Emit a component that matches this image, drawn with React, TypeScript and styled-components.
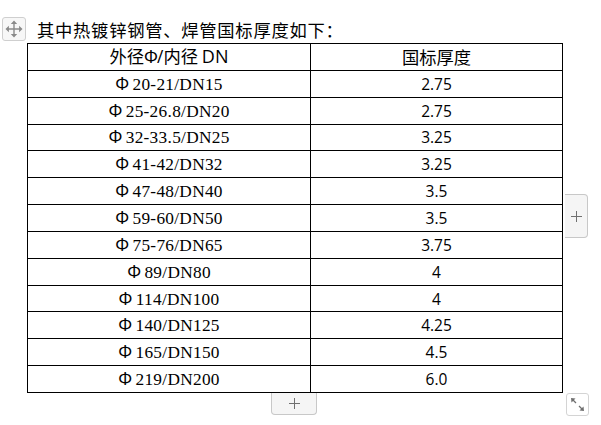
import React from "react";
import styled, { createGlobalStyle } from "styled-components";

const Global = createGlobalStyle`
  html, body { margin: 0; padding: 0; background: #fff; }
  body { width: 601px; height: 425px; overflow: hidden; }
`;

const Page = styled.div`
  position: relative;
  width: 601px;
  height: 425px;
  padding: 17px 0 0 2px;
  box-sizing: border-box;
`;

const TitleRow = styled.div`
  display: flex;
  align-items: center;
  gap: 11px;
  height: 24px;
`;

const Handle = styled.div`
  width: 24px;
  height: 24px;
  box-sizing: border-box;
  border: 1px solid #cfcfcf;
  border-radius: 3px;
  background: #f7f7f7;
  display: flex;
  align-items: center;
  justify-content: center;
`;

const Title = styled.div`
  font-family: "Noto Sans CJK SC", sans-serif;
  font-size: 17.3px;
  letter-spacing: 0.75px;
  line-height: 24px;
  color: #000;
  padding-top: 2px;
`;

const TableWrap = styled.div`
  position: relative;
  margin: 2px 0 0 25px;
  width: 536px;
`;

const Table = styled.table`
  border-collapse: collapse;
  width: 536px;
  table-layout: fixed;
`;

const Cell = styled.td<{ $kind?: "serif" | "sans" | "cjk" }>`
  border: 1px solid #000;
  padding: 0;
  height: 25.85px;
  text-align: center;
  vertical-align: middle;
  color: #000;
  white-space: nowrap;
  line-height: 20px;
  letter-spacing: ${(p) => (p.$kind === "serif" || !p.$kind ? "0.3px" : "0")};
  font-family: ${(p) =>
    p.$kind === "sans"
      ? `"Open Sans", sans-serif`
      : p.$kind === "cjk"
      ? `"Noto Sans CJK SC", sans-serif`
      : `"Liberation Serif", "Noto Sans CJK SC", serif`};
  font-size: ${(p) => (p.$kind === "sans" ? "15.5px" : "17.3px")};
`;

const Phi = styled.span<{ $w?: number }>`
  display: inline-block;
  width: ${(p) => p.$w ?? 17.3}px;
  text-align: left;
  font-family: "Noto Sans CJK SC", sans-serif;
  letter-spacing: 0;
`;

const Latin = styled.span<{ $size: number }>`
  font-family: "Open Sans", sans-serif;
  font-size: ${(p) => p.$size}px;
`;

const SideButton = styled.div`
  position: absolute;
  left: 538px;
  top: 151px;
  width: 23px;
  height: 44px;
  box-sizing: border-box;
  border: 1px solid #c8c8c8;
  border-left: none;
  border-radius: 0 4px 4px 0;
  background: #f5f5f5;
  display: flex;
  align-items: center;
  justify-content: center;
`;

const BottomButton = styled.div`
  position: absolute;
  left: 244px;
  top: 350px;
  width: 46px;
  height: 22px;
  box-sizing: border-box;
  border: 1px solid #c8c8c8;
  border-top: none;
  border-radius: 0 0 4px 4px;
  background: #f5f5f5;
  display: flex;
  align-items: center;
  justify-content: center;
`;

const ResizeBox = styled.div`
  position: absolute;
  left: 539px;
  top: 350px;
  width: 23px;
  height: 23px;
  box-sizing: border-box;
  border: 1px solid #d4d4d4;
  border-radius: 3px;
  background: #fff;
  display: flex;
  align-items: center;
  justify-content: center;
`;

const Plus = () => (
  <svg width="11" height="11" viewBox="0 0 11 11">
    <path d="M5.5 0 V11 M0 5.5 H11" stroke="#707070" strokeWidth="1" />
  </svg>
);

const MoveIcon = () => (
  <svg width="18" height="18" viewBox="0 0 18 18" fill="#8a8a8a">
    <path d="M8.3 3 h1.4 v12 h-1.4z M3 8.3 h12 v1.4 h-12z" />
    <path d="M9 0.5 L12.2 3.9 H5.8z M9 17.5 L5.8 14.1 H12.2z M0.5 9 L3.9 5.8 V12.2z M17.5 9 L14.1 12.2 V5.8z" />
  </svg>
);

const ResizeIcon = () => (
  <svg width="17" height="17" viewBox="0 0 17 17" fill="#6f6f6f">
    <path d="M2 2 L6.5 2.5 L2.5 6.5z" />
    <path d="M4 4 L7 7" stroke="#6f6f6f" strokeWidth="1.2" />
    <path d="M15 15 L10.5 14.5 L14.5 10.5z" />
    <path d="M13 13 L10 10" stroke="#6f6f6f" strokeWidth="1.2" />
  </svg>
);

const rows: [string, string][] = [
  ["20-21/DN15", "2.75"],
  ["25-26.8/DN20", "2.75"],
  ["32-33.5/DN25", "3.25"],
  ["41-42/DN32", "3.25"],
  ["47-48/DN40", "3.5"],
  ["59-60/DN50", "3.5"],
  ["75-76/DN65", "3.75"],
  ["89/DN80", "4"],
  ["114/DN100", "4"],
  ["140/DN125", "4.25"],
  ["165/DN150", "4.5"],
  ["219/DN200", "6.0"],
];

export default function App() {
  return (
    <Page>
      <Global />
      <TitleRow>
        <Handle>
          <MoveIcon />
        </Handle>
        <Title>其中热镀锌钢管、焊管国标厚度如下：</Title>
      </TitleRow>
      <TableWrap>
        <Table>
          <colgroup>
            <col style={{ width: 283 }} />
            <col />
          </colgroup>
          <tbody>
            <tr>
              <Cell $kind="cjk">
                外径<Phi $w={13}>Φ</Phi>
                <Latin $size={17.3}>/</Latin>内径 <Latin $size={18}>DN</Latin>
              </Cell>
              <Cell $kind="cjk">国标厚度</Cell>
            </tr>
            {rows.map(([a, b]) => (
              <tr key={a}>
                <Cell>
                  <Phi>Φ</Phi>
                  {a}
                </Cell>
                <Cell $kind="sans">{b}</Cell>
              </tr>
            ))}
          </tbody>
        </Table>
        <SideButton>
          <Plus />
        </SideButton>
        <BottomButton>
          <Plus />
        </BottomButton>
        <ResizeBox>
          <ResizeIcon />
        </ResizeBox>
      </TableWrap>
    </Page>
  );
}
